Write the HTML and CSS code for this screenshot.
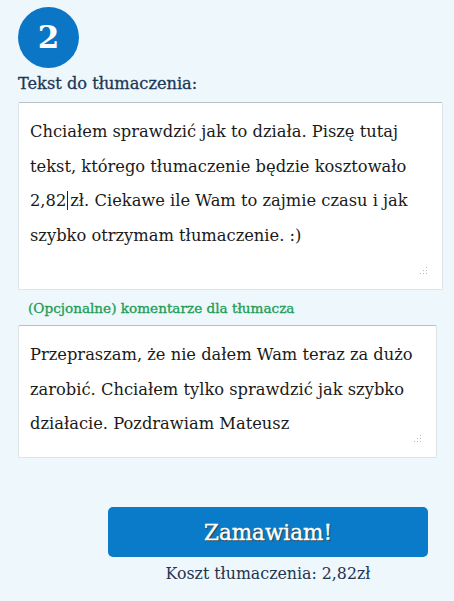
FILE: index.html
```html
<!DOCTYPE html>
<html lang="pl">
<head>
<meta charset="utf-8">
<link rel="stylesheet" href="styles.css">
</head>
<body>
<div class="page">
  <div class="step">2</div>
  <div class="label">Tekst do tłumaczenia:</div>
  <div class="box box-main">
    <p class="txt">Chciałem sprawdzić jak to działa. Piszę tutaj tekst, którego tłumaczenie będzie kosztowało 2,82<i class="caret"></i>zł. Ciekawe ile Wam to zajmie czasu i jak szybko otrzymam tłumaczenie. :)</p>
    <svg class="grip" width="8" height="8" viewBox="0 0 8 8"><g fill="#b8b8b8"><rect x="6" y="0" width="1" height="1"/><rect x="6" y="3" width="1" height="1"/><rect x="3" y="3" width="1" height="1"/><rect x="6" y="6" width="1" height="1"/><rect x="3" y="6" width="1" height="1"/><rect x="0" y="6" width="1" height="1"/></g></svg>
  </div>
  <div class="opt">(Opcjonalne) komentarze dla tłumacza</div>
  <div class="box box-comment">
    <p class="txt">Przepraszam, że nie dałem Wam teraz za dużo zarobić. Chciałem tylko sprawdzić jak szybko działacie. Pozdrawiam Mateusz</p>
    <svg class="grip" width="8" height="8" viewBox="0 0 8 8"><g fill="#b8b8b8"><rect x="6" y="0" width="1" height="1"/><rect x="6" y="3" width="1" height="1"/><rect x="3" y="3" width="1" height="1"/><rect x="6" y="6" width="1" height="1"/><rect x="3" y="6" width="1" height="1"/><rect x="0" y="6" width="1" height="1"/></g></svg>
  </div>
  <div class="order">
    <button class="btn">Zamawiam!</button>
    <div class="cost">Koszt tłumaczenia: 2,82zł</div>
  </div>
</div>
</body>
</html>
```
FILE: styles.css
```css
html, body {
  margin: 0;
  padding: 0;
  background: #eef7fb;
}
body {
  font-family: "DejaVu Serif", serif;
  color: #1e3550;
}
.page {
  width: 454px;
  height: 601px;
  padding: 7px 11px 0 18px;
  box-sizing: border-box;
  display: flex;
  flex-direction: column;
}
.step {
  width: 61px;
  height: 61px;
  border-radius: 50%;
  background: #0b76c5;
  color: #fff;
  font-weight: bold;
  font-size: 31px;
  display: flex;
  align-items: center;
  justify-content: center;
  line-height: 1;
}
.label {
  margin-top: 6px;
  font-size: 16.2px;
  line-height: 20px;
  color: #1c3757;
  -webkit-text-stroke: 0.3px #1c3757;
}
.box {
  position: relative;
  background: #fff;
  border: 1px solid #dde3e7;
  border-top-color: #b9bfc4;
  border-radius: 2px;
  box-sizing: border-box;
}
.box-main {
  margin-top: 8px;
  height: 188px;
  width: 425px;
}
.box-comment {
  margin-top: 8px;
  height: 133px;
  width: 419px;
}
.txt {
  margin: 0;
  padding: 12px 10px 0 11px;
  font-size: 16.3px;
  line-height: 34.5px;
  color: #1a1a1a;
}
.caret {
  display: inline-block;
  width: 0;
  height: 19px;
  border-left: 1px solid #222;
  vertical-align: -4px;
  margin: 0 2px 0 1px;
}
.grip {
  position: absolute;
  right: 14px;
  bottom: 14px;
}
.opt {
  margin-top: 9px;
  padding-left: 10px;
  font-size: 13.6px;
  line-height: 18px;
  color: #1f9d57;
  -webkit-text-stroke: 0.35px #1f9d57;
}
.order {
  margin-top: 49px;
  margin-left: 90px;
  width: 320px;
  display: flex;
  flex-direction: column;
  align-items: center;
}
.btn {
  width: 320px;
  height: 50px;
  border: 0;
  border-radius: 5px;
  background: #0a7bc8;
  color: #fff;
  font-family: inherit;
  font-size: 21.5px;
  -webkit-text-stroke: 0.4px #fff;
  text-shadow: 1px 1px 1px #333;
  padding: 0;
}
.cost {
  margin-top: 7px;
  font-size: 15.8px;
  line-height: 20px;
  color: #1e3550;
}
```
